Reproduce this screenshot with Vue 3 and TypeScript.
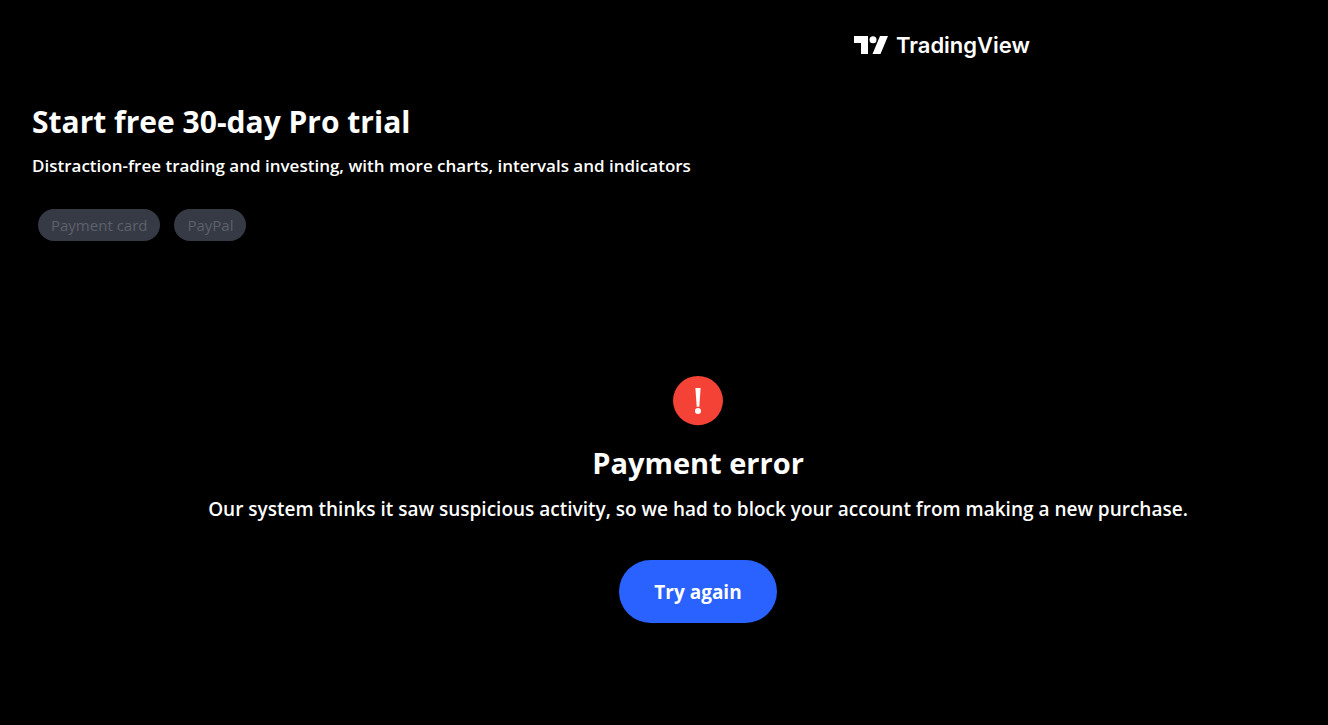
<script setup lang="ts">
const methods: string[] = ['Payment card', 'PayPal']
</script>

<template>
  <div class="page">
    <header class="top">
      <a class="brand" href="#">
        <svg class="mark" viewBox="0 0 34 18" aria-hidden="true">
          <path d="M0 0h14v18H7V7H0z" />
          <circle cx="19" cy="3.7" r="3.5" />
          <path d="M26 0h8l-7.5 18h-8z" />
        </svg>
        <span>TradingView</span>
      </a>
    </header>
    <main>
      <section class="intro">
        <h1>Start free 30-day Pro trial</h1>
        <p class="lead">Distraction-free trading and investing, with more charts, intervals and indicators</p>
        <div class="methods">
          <button v-for="method in methods" :key="method" type="button" class="chip" disabled>{{ method }}</button>
        </div>
      </section>
      <section class="error">
        <svg class="alert" viewBox="0 0 50 50" aria-hidden="true">
          <ellipse cx="25" cy="24.6" rx="25" ry="24.6" />
          <path d="M22.4 12h5.2l-1.3 18.8h-2.6z" />
          <circle class="dot" cx="25" cy="35" r="3" />
        </svg>
        <h2>Payment error</h2>
        <p class="message">Our system thinks it saw suspicious activity, so we had to block your account from making a new purchase.</p>
        <button type="button" class="retry">Try again</button>
      </section>
    </main>
  </div>
</template>

<style>
body {
  background: #000;
}
</style>

<style scoped>
.page {
  min-height: 100vh;
  box-sizing: border-box;
  background: #000;
  color: #fff;
  font-family: "Trebuchet MS", "Open Sans", "Noto Sans", sans-serif;
}
.top {
  display: flex;
  justify-content: flex-end;
  padding: 29px 298px 0 32px;
}
.brand {
  display: flex;
  align-items: center;
  gap: 8px;
  color: #fff;
  text-decoration: none;
  font: 600 22px/32px Inter, sans-serif;
}
.mark {
  width: 34px;
  height: 18px;
  fill: #fff;
}
.intro {
  padding: 41px 32px 0;
}
h1,
h2,
p {
  margin: 0;
}
h1,
h2 {
  font-size: 30px;
  font-weight: 700;
  line-height: 40px;
}
.lead {
  margin-top: 12px;
  font-size: 17px;
  font-weight: 600;
  line-height: 24px;
}
.methods {
  display: flex;
  gap: 14px;
  margin-top: 31px;
  padding-left: 6px;
}
.chip {
  height: 32px;
  padding: 0 13px;
  border: 0;
  border-radius: 16px;
  background: #363a45;
  color: #5d606b;
  font: inherit;
  font-size: 15px;
}
.error {
  display: flex;
  flex-direction: column;
  align-items: center;
  padding: 135px 0 32px 68px;
}
.alert {
  width: 50px;
  height: 50px;
  fill: #f44336;
}
.alert path,
.alert .dot {
  fill: #fff;
}
h2 {
  margin-top: 17px;
  font-size: 29px;
}
.message {
  margin-top: 12px;
  font-size: 19px;
  font-weight: 600;
  line-height: 28px;
  text-align: center;
}
.retry {
  min-width: 158px;
  height: 63px;
  margin-top: 37px;
  padding: 0 35px;
  border: 0;
  border-radius: 32px;
  background: #2962ff;
  color: #fff;
  font: inherit;
  font-size: 19px;
  font-weight: 700;
}
</style>
